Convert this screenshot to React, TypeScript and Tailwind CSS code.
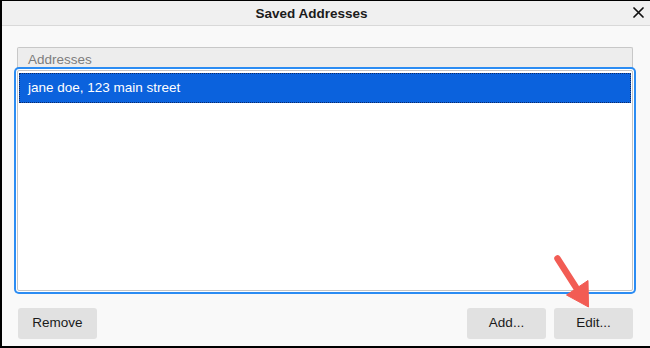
import React from "react";

export default function App() {
  const font = { fontFamily: '"Liberation Sans", Arial, sans-serif' };
  return (
    <div
      className="relative w-[650px] h-[348px] bg-[#f9f9f9] border-l-2 border-t border-b-2 border-black flex flex-col overflow-hidden"
      style={font}
    >
      {/* Title bar */}
      <div className="h-[25px] shrink-0 bg-[#f0f0f0] border-b border-[#d9d9d9] flex items-center">
        <div className="flex-1 flex justify-center pr-[4px]">
          <span className="text-[13.5px] font-bold text-[#1b1b1b] leading-none mt-[1px]">
            Saved Addresses
          </span>
        </div>
        <div className="w-[25px] h-full flex items-center justify-start">
          <svg width="11" height="11" viewBox="0 0 11 11" className="ml-[8px] mt-[-1px]">
            <path d="M1 1 L10 10 M10 1 L1 10" stroke="#111" strokeWidth="1.7" strokeLinecap="round" />
          </svg>
        </div>
      </div>

      {/* Body */}
      <div className="flex-1 flex flex-col pl-[15px] pr-[17px] pt-[21px] pb-[7px]">
        {/* Header */}
        <div className="h-[24px] bg-[#ededed] border-t border-l border-r border-[#c8c8c8] rounded-t-[2px] flex items-center pl-[10px]">
          <span className="text-[13.5px] text-[#7d7d7d] leading-none">Addresses</span>
        </div>
        {/* Listbox */}
        <div className="h-[221px] bg-white border border-[#c4c4c4] rounded-[2px] shadow-[0_0_0_1px_#ffffff,0_0_0_3px_#2b8cf3] p-[1px] pt-[2px] relative z-10 mt-[-1px]">
          <div className="h-[30px] bg-[#0b62dd] border border-dotted border-[#0d2a66] flex items-center pl-[8px]">
            <span className="text-[13.5px] text-white leading-none">jane doe, 123 main street</span>
          </div>
        </div>
        {/* Buttons */}
        <div className="mt-auto flex items-center pl-[1px]">
          <button className="w-[79px] h-[31px] bg-[#e1e1e1] rounded-[3px] text-[13.5px] text-[#1a1a1a]">
            Remove
          </button>
          <div className="flex-1" />
          <button className="w-[79px] h-[31px] bg-[#e1e1e1] rounded-[3px] text-[13.5px] text-[#1a1a1a]">
            Add...
          </button>
          <button className="w-[79px] h-[31px] bg-[#e1e1e1] rounded-[3px] text-[13.5px] text-[#1a1a1a] ml-[8px]">
            Edit...
          </button>
        </div>
      </div>

      {/* Red arrow annotation */}
      <svg
        className="absolute left-[538px] top-[244px] z-20 pointer-events-none"
        width="62"
        height="70"
        viewBox="540 245 62 70"
      >
        <line x1="557.5" y1="258.5" x2="577" y2="289" stroke="#f25c54" strokeWidth="6.5" strokeLinecap="round" />
        <polygon points="588.5,307 566.5,295 588,280.5" fill="#f25c54" stroke="#f25c54" strokeWidth="1" strokeLinejoin="round" />
      </svg>
    </div>
  );
}
